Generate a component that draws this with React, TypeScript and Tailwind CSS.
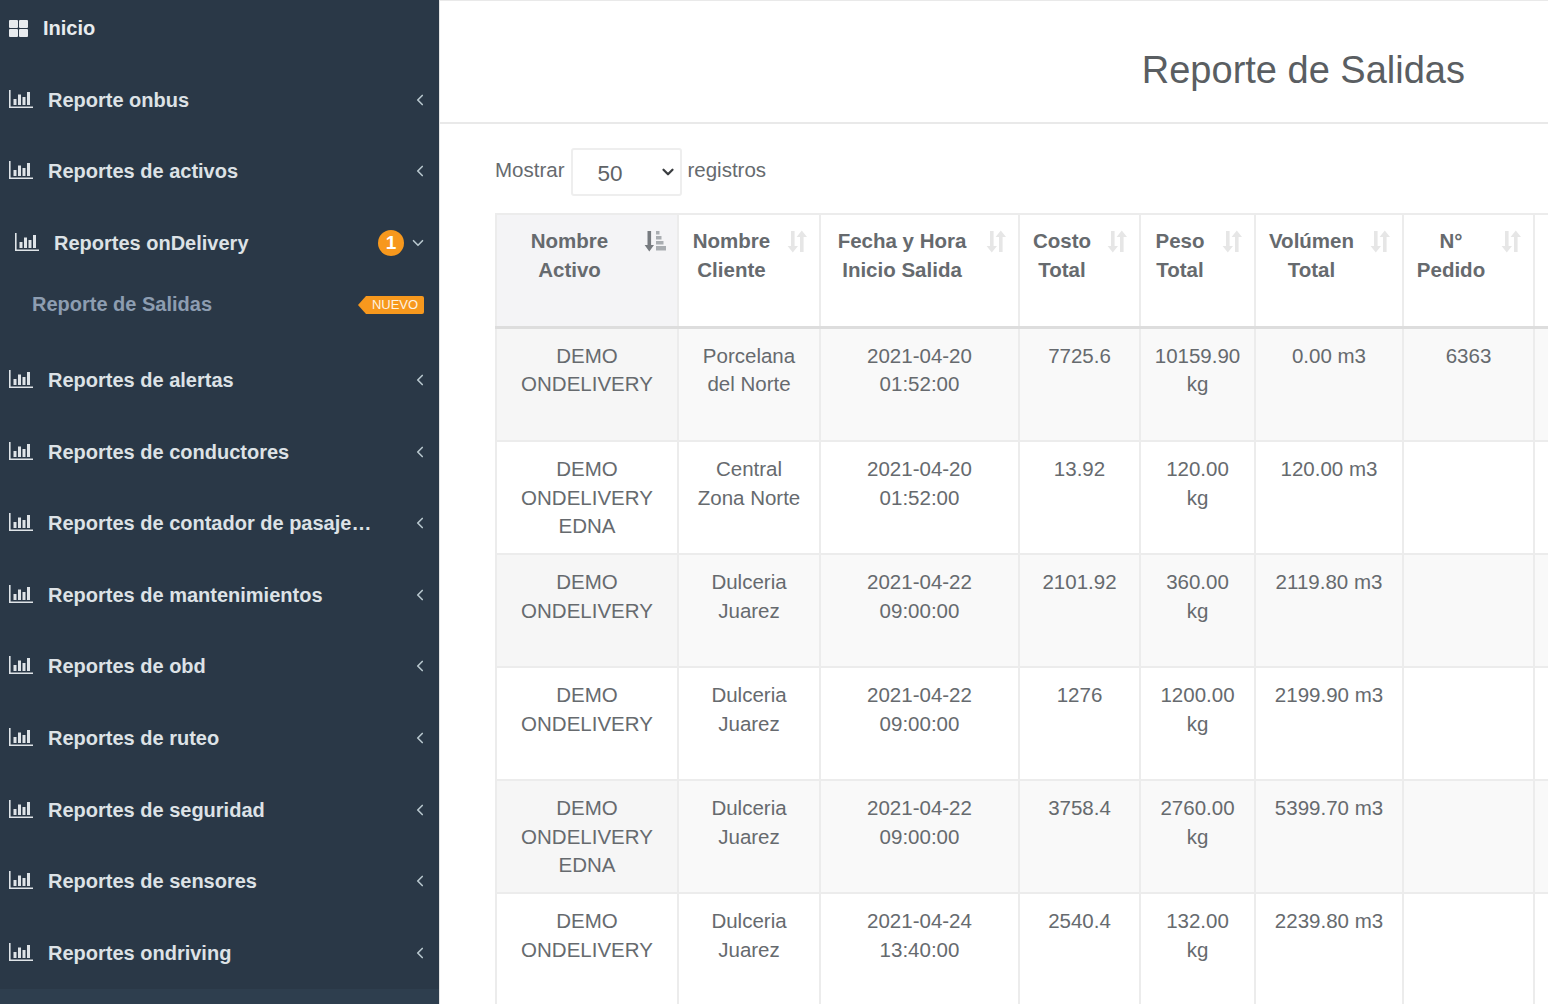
import { ChevronDown, ChevronLeft } from "lucide-react";

const menu = [
  "Reportes de alertas",
  "Reportes de conductores",
  "Reportes de contador de pasaje…",
  "Reportes de mantenimientos",
  "Reportes de obd",
  "Reportes de ruteo",
  "Reportes de seguridad",
  "Reportes de sensores",
  "Reportes ondriving",
];

const columns = [
  { width: "w-[182px]", top: "Nombre", bottom: "Activo", sorted: true },
  { width: "w-[142px]", top: "Nombre", bottom: "Cliente" },
  { width: "w-[199px]", top: "Fecha y Hora", bottom: "Inicio Salida" },
  { width: "w-[121px]", top: "Costo", bottom: "Total" },
  { width: "w-[115px]", top: "Peso", bottom: "Total" },
  { width: "w-[148px]", top: "Volúmen", bottom: "Total" },
  { width: "w-[131px]", top: "N°", bottom: "Pedido" },
];

const rows = [
  [["DEMO", "ONDELIVERY"], ["Porcelana", "del Norte"], ["2021-04-20", "01:52:00"], ["7725.6"], ["10159.90", "kg"], ["0.00 m3"], ["6363"]],
  [["DEMO", "ONDELIVERY", "EDNA"], ["Central", "Zona Norte"], ["2021-04-20", "01:52:00"], ["13.92"], ["120.00", "kg"], ["120.00 m3"], []],
  [["DEMO", "ONDELIVERY"], ["Dulceria", "Juarez"], ["2021-04-22", "09:00:00"], ["2101.92"], ["360.00", "kg"], ["2119.80 m3"], []],
  [["DEMO", "ONDELIVERY"], ["Dulceria", "Juarez"], ["2021-04-22", "09:00:00"], ["1276"], ["1200.00", "kg"], ["2199.90 m3"], []],
  [["DEMO", "ONDELIVERY", "EDNA"], ["Dulceria", "Juarez"], ["2021-04-22", "09:00:00"], ["3758.4"], ["2760.00", "kg"], ["5399.70 m3"], []],
  [["DEMO", "ONDELIVERY"], ["Dulceria", "Juarez"], ["2021-04-24", "13:40:00"], ["2540.4"], ["132.00", "kg"], ["2239.80 m3"], []],
];

function BarIcon() {
  return (
    <svg viewBox="0 0 24 20" className="w-6 h-5 shrink-0 -translate-y-px" fill="#dfe4e8">
      <path d="M0 1h1.6v16.4H24V19H0z" />
      <rect x="4.5" y="10" width="3" height="6" />
      <rect x="9" y="5.5" width="3" height="10.5" />
      <rect x="13.5" y="8" width="3" height="8" />
      <rect x="18" y="3" width="3" height="13" />
    </svg>
  );
}

function GridIcon() {
  return (
    <svg viewBox="0 0 19 17" className="w-[19px] h-[17px] shrink-0" fill="#e8ebee">
      <rect x="0" y="0" width="9" height="8" rx="1" />
      <rect x="10" y="0" width="9" height="8" rx="1" />
      <rect x="0" y="9" width="9" height="8" rx="1" />
      <rect x="10" y="9" width="9" height="8" rx="1" />
    </svg>
  );
}

function SortIcon({ sorted }: { sorted?: boolean }) {
  if (sorted) {
    return (
      <svg viewBox="0 0 22 22" className="absolute top-[15px] right-[11px] w-[22px] h-[22px]">
        <path d="M3.5 1h3.6v14h2.9l-4.7 6.5L.6 15h2.9z" fill="#777b80" />
        <rect x="12" y="1" width="3.5" height="3.5" fill="#a9adb1" />
        <rect x="12" y="6" width="5.5" height="3.5" fill="#a9adb1" />
        <rect x="12" y="11" width="7.5" height="3.5" fill="#a9adb1" />
        <rect x="12" y="16" width="10" height="4.5" fill="#a9adb1" />
      </svg>
    );
  }
  return (
    <svg viewBox="0 0 20 23" className="absolute top-[15px] right-[12px] w-5 h-[23px]" fill="#e6e6e6">
      <path d="M4 1h3.6v15H11l-5.2 6.5L.6 16H4z" />
      <path d="M13 22h3.6V7H20L14.8.5 9.6 7H13z" />
    </svg>
  );
}

function MenuRow({ label }: { label: string }) {
  return (
    <div className="h-[71.6px] flex items-center pl-[9px] pr-[10px]">
      <BarIcon />
      <span className="ml-[15px] font-bold text-[#dde2e6]">{label}</span>
      <ChevronLeft className="ml-auto w-[18px] h-[18px] text-[#b8c7ce]" strokeWidth={2.2} />
    </div>
  );
}

export default function App() {
  return (
    <div className="h-[1004px] w-[1548px] flex overflow-hidden bg-white font-['Liberation_Sans',Arial,sans-serif] text-[20.5px] text-[#666a6e]">
      <aside className="w-[439px] shrink-0 flex flex-col bg-[#2a3847] text-[20px]">
        <div className="h-[56px] mb-2 flex items-center pl-[9px] font-bold text-[#e8ebee]">
          <GridIcon />
          <span className="ml-[15px]">Inicio</span>
        </div>
        <MenuRow label="Reporte onbus" />
        <MenuRow label="Reportes de activos" />
        <div className="h-[71.6px] flex items-center pl-[15px] pr-[12px]">
          <BarIcon />
          <span className="ml-[15px] font-bold text-[#dde2e6]">Reportes onDelivery</span>
          <span className="ml-auto w-[26px] h-[26px] rounded-full bg-[#f7981d] flex items-center justify-center text-white font-bold text-[19px]">1</span>
          <ChevronDown className="ml-[5px] w-[18px] h-[18px] text-[#b8c7ce]" strokeWidth={2.2} />
        </div>
        <div className="h-[50px] mb-[15.4px] flex items-center pl-[32px] pr-[15px]">
          <span className="font-bold text-[#8d9db1]">Reporte de Salidas</span>
          <span className="relative ml-auto h-[18px] w-[58px] mt-[2px] bg-[#f7981d] rounded-r-[2px] flex items-center justify-center text-[13px] text-[#fdf3e3]">
            <span className="absolute left-[-8px] top-0 border-y-[9px] border-r-[8px] border-y-transparent border-r-[#f7981d]" />
            NUEVO
          </span>
        </div>
        {menu.map((label) => (
          <MenuRow key={label} label={label} />
        ))}
        <div className="flex-1 bg-[#2e3e4e]" />
      </aside>

      <main className="flex-1 min-w-0 flex flex-col border-l border-[#e4e4e4]">
        <header className="h-[124px] shrink-0 flex items-center justify-end pr-[83px] pt-[20px] border-y border-[#e9e9e9] border-b-2">
          <h1 className="text-[38px] text-[#5a5e62] mb-[3px]">Reporte de Salidas</h1>
        </header>

        <div className="pl-[55px]">
          <div className="h-[89px] flex items-start pt-[24px] leading-[44px]">
            <span>Mostrar</span>
            <div className="ml-[7px] mr-[5px] w-[111px] h-[48px] border-2 border-[#eeeeee] rounded-[3px] flex items-center pl-[24px] pr-[3px] pt-[3px] text-[22.5px] text-[#5f6367]">
              50
              <ChevronDown className="ml-auto -mt-[3px] w-[18px] h-[18px] text-[#3a3d40]" strokeWidth={3} />
            </div>
            <span>registros</span>
          </div>

          <table className="table-fixed w-[1200px] border-collapse leading-[28.5px]">
            <thead>
              <tr className="h-[113px]">
                {columns.map((col, i) => (
                  <th
                    key={i}
                    className={`${col.width} relative align-top text-center font-bold pt-[12px] pl-[12px] pr-[47px] border-2 border-b-[3px] border-[#ececec] border-b-[#dddddd] ${col.sorted ? "bg-[#f4f4f6]" : ""}`}
                  >
                    {col.top}
                    <br />
                    {col.bottom}
                    <SortIcon sorted={col.sorted} />
                  </th>
                ))}
                <th className="border-2 border-b-[3px] border-[#ececec] border-b-[#dddddd]" />
              </tr>
            </thead>
            <tbody>
              {rows.map((row, r) => (
                <tr key={r} className={`${r === 0 ? "h-[114px]" : "h-[113px]"} ${r % 2 === 0 ? "bg-[#f9f9f9]" : ""}`}>
                  {row.map((lines, c) => (
                    <td key={c} className={`align-top text-center pt-[13px] px-2 border-2 border-[#ececec] ${c === 0 && r % 2 === 0 ? "bg-[#f6f6f6]" : ""}`}>
                      {lines.map((line) => (
                        <div key={line}>{line}</div>
                      ))}
                    </td>
                  ))}
                  <td className="border-2 border-[#ececec]" />
                </tr>
              ))}
            </tbody>
          </table>
        </div>
      </main>
    </div>
  );
}
